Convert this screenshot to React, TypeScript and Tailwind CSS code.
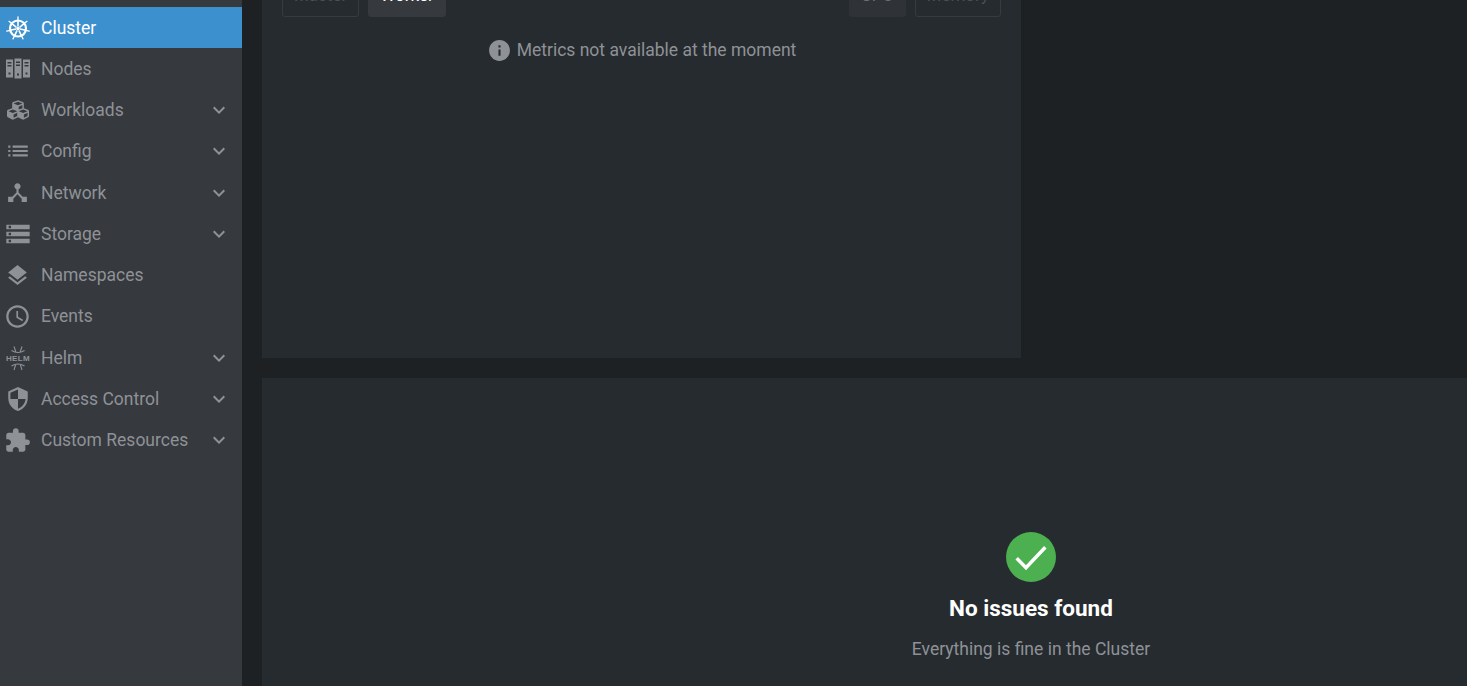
import type { ReactNode } from "react";
import { FaCubes } from "react-icons/fa";
import {
  MdAccessTime,
  MdDeviceHub,
  MdExtension,
  MdInfo,
  MdKeyboardArrowDown,
  MdLayers,
  MdList,
  MdSecurity,
  MdStorage,
} from "react-icons/md";

function KubeIcon() {
  const spokes = [0, 51.4, 102.9, 154.3, 205.7, 257.1, 308.6];
  return (
    <svg viewBox="0 0 24 24" className="h-6 w-6" fill="none" stroke="currentColor">
      <circle cx="12" cy="12.500" r="8" strokeWidth="2.200" />
      <circle cx="12" cy="12.500" r="1.800" fill="currentColor" stroke="none" />
      {spokes.map((deg) => (
        <g key={deg} transform={`rotate(${deg} 12 12.500)`}>
          <path d="M12 1v4.500" strokeWidth="1.300" strokeLinecap="round" />
          <path d="M12 5.500v5" strokeWidth="1.600" />
        </g>
      ))}
    </svg>
  );
}

function NodesIcon() {
  return (
    <svg viewBox="0 0 24 24" className="h-6 w-6" fill="currentColor">
      <path
        fillRule="evenodd"
        d="M0 2.500h7v18H0zM8.500 1.500h7v20h-7zM17 2.500h7v18h-7zM1.500 5v1.500h4V5zM1.500 8v1.500h4V8zM10 4.500V6h4V4.500zM10 7.500V9h4V7.500zM18.500 5v1.500h4V5zM18.500 8v1.500h4V8zM2.500 15.500v2h2v-2zM11 16.500v2h2v-2zM19.500 15.500v2h2v-2z"
      />
    </svg>
  );
}

function HelmIcon() {
  return (
    <svg viewBox="0 0 24 24" className="h-6 w-6 overflow-visible" fill="none" stroke="currentColor" strokeWidth="1.100">
      <path d="M5.500 4.500c4 2.500 9 2.500 13 0M8 .5l1.700 5M16 .5l-1.700 5" />
      <path d="M5.500 20c4-2.500 9-2.500 13 0M8 24l1.700-5.500M16 24l-1.700-5.500" />
      <text
        x="12"
        y="15"
        textAnchor="middle"
        fill="currentColor"
        stroke="none"
        className="text-[8px] font-bold tracking-[0.4px] font-['Liberation_Sans',sans-serif]"
      >
        HELM
      </text>
    </svg>
  );
}

type NavItem = {
  label: string;
  icon: ReactNode;
  active?: boolean;
  expandable?: boolean;
};

const NAV_ITEMS: NavItem[] = [
  { label: "Cluster", icon: <KubeIcon />, active: true },
  { label: "Nodes", icon: <NodesIcon /> },
  { label: "Workloads", icon: <FaCubes size={22} />, expandable: true },
  { label: "Config", icon: <MdList size={26} />, expandable: true },
  { label: "Network", icon: <MdDeviceHub size={25} />, expandable: true },
  { label: "Storage", icon: <MdStorage size={28} />, expandable: true },
  { label: "Namespaces", icon: <MdLayers size={25} /> },
  { label: "Events", icon: <MdAccessTime size={27} /> },
  { label: "Helm", icon: <HelmIcon />, expandable: true },
  { label: "Access Control", icon: <MdSecurity size={26} />, expandable: true },
  { label: "Custom Resources", icon: <MdExtension size={27} />, expandable: true },
];

function SidebarRow({ item }: { item: NavItem }) {
  return (
    <div
      className={`flex h-[41.25px] items-center pt-px pr-[11px] text-[17.5px] ${
        item.active ? "bg-[#3d90ce] text-white" : "text-[#8e9297]"
      }`}
    >
      <span className="flex w-[35px] shrink-0 items-center justify-center">{item.icon}</span>
      <span className="ml-1.5 flex-1">{item.label}</span>
      {item.expandable && <MdKeyboardArrowDown size={24} />}
    </div>
  );
}

function MetricButton({ label, variant }: { label: string; variant: "idle" | "active" | "muted" }) {
  const tone = {
    idle: "border-[#373a3e] text-[#4c5053]",
    active: "border-[#36393e] bg-[#36393e] text-white",
    muted: "border-[#2f3338] bg-[#2f3338] text-[#6b6f75]",
  }[variant];
  return (
    <button type="button" className={`h-[42px] rounded-[3px] border px-[11px] text-[17px] ${tone}`}>
      {label}
    </button>
  );
}

export default function App() {
  return (
    <div className="flex h-[686px] w-[1467px] overflow-hidden bg-[#1e2124] font-['Roboto',sans-serif]">
      <aside className="w-[242px] shrink-0 bg-[#36393e] pt-[6.6px]">
        {NAV_ITEMS.map((item) => (
          <SidebarRow key={item.label} item={item} />
        ))}
      </aside>

      <main className="-mt-[25px] flex min-w-0 flex-1 flex-col gap-5 pl-5">
        {/* Metrics card, scrolled partly out of view */}
        <section className="h-[383px] w-[759px] shrink-0 bg-[#262b2f] px-5">
          <div className="flex justify-between">
            <div className="flex gap-[9px]">
              <MetricButton label="Master" variant="idle" />
              <MetricButton label="Worker" variant="active" />
            </div>
            <div className="flex gap-[9px]">
              <MetricButton label="CPU" variant="muted" />
              <MetricButton label="Memory" variant="idle" />
            </div>
          </div>
          <div className="mt-[20px] flex items-center justify-center gap-[5px] text-[17.5px] text-[#8e9297]">
            <MdInfo size={25} />
            <span>Metrics not available at the moment</span>
          </div>
        </section>

        {/* Issues card, wider than the window */}
        <section className="flex w-[1538px] flex-1 flex-col items-center bg-[#262b2f] pt-[154px]">
          <svg viewBox="0 0 50 50" className="h-[50px] w-[50px]">
            <circle cx="25" cy="25" r="25" fill="#4caf50" />
            <path d="M10.700 26.300L20 35.700L39.300 15.300" fill="none" stroke="white" strokeWidth="3.500" />
          </svg>
          <h2 className="mt-[10px] text-[22.5px] font-bold leading-[32px] text-white">No issues found</h2>
          <p className="mt-[12px] text-[17.5px] leading-[26px] text-[#8e9297]">Everything is fine in the Cluster</p>
        </section>
      </main>
    </div>
  );
}
